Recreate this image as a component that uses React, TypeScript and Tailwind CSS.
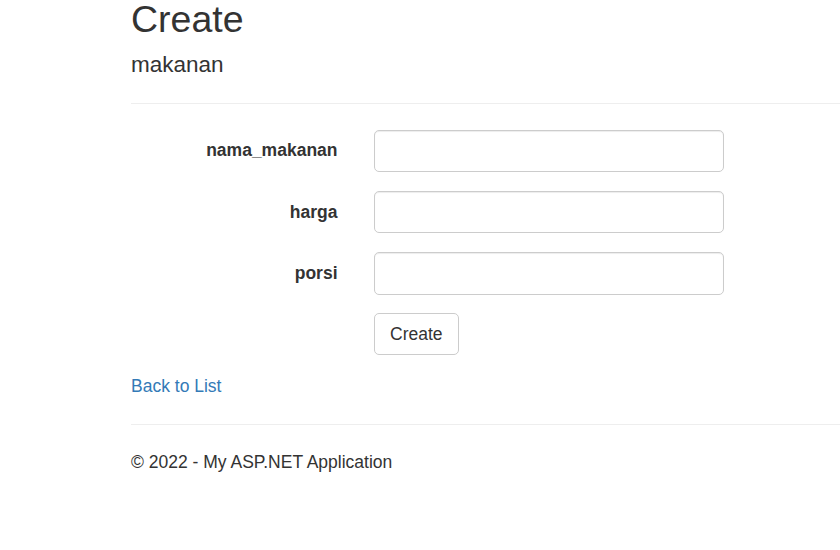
import React from "react";

export default function App() {
  const fields = ["nama_makanan", "harga", "porsi"];
  return (
    <div
      className="min-h-[550px] w-[840px] overflow-hidden bg-white text-[#333] text-[17.5px] leading-[25px]"
      style={{ fontFamily: '"Liberation Sans", Arial, sans-serif' }}
    >
      <div className="pl-[131px] -mt-px">
        <h2 className="text-[37.5px] leading-[41.25px] font-normal">Create</h2>
        <div>
          <h4 className="mt-[12.5px] text-[22.5px] leading-[24.75px] font-normal">makanan</h4>
          <div className="mt-[25px] border-t border-[#eee] h-px" />
          <div className="pt-[26px]">
            {fields.map((f) => (
              <div key={f} className="flex mb-[18.75px]">
                <label className="w-[206.5px] pt-[8.75px] text-right font-bold">{f}</label>
                <div className="ml-[36.5px]">
                  <input
                    type="text"
                    className="block h-[42.5px] w-[350px] rounded-[5px] border border-[#ccc] bg-white px-[15px] shadow-[inset_0_1px_1px_rgba(0,0,0,0.075)] outline-none"
                  />
                </div>
              </div>
            ))}
            <div className="flex mt-[1.5px] mb-[18.5px]">
              <div className="ml-[243px]">
                <button className="h-[42px] rounded-[5px] border border-[#ccc] bg-white px-[15px] text-[17.5px] leading-[25px] text-[#333]">
                  Create
                </button>
              </div>
            </div>
          </div>
        </div>
        <div>
          <a href="#" className="text-[#337ab7]">Back to List</a>
        </div>
        <div className="mt-[25px] border-t border-[#eee] h-px" />
        <p className="mt-[25.5px]">© 2022 - My ASP.NET Application</p>
      </div>
    </div>
  );
}
